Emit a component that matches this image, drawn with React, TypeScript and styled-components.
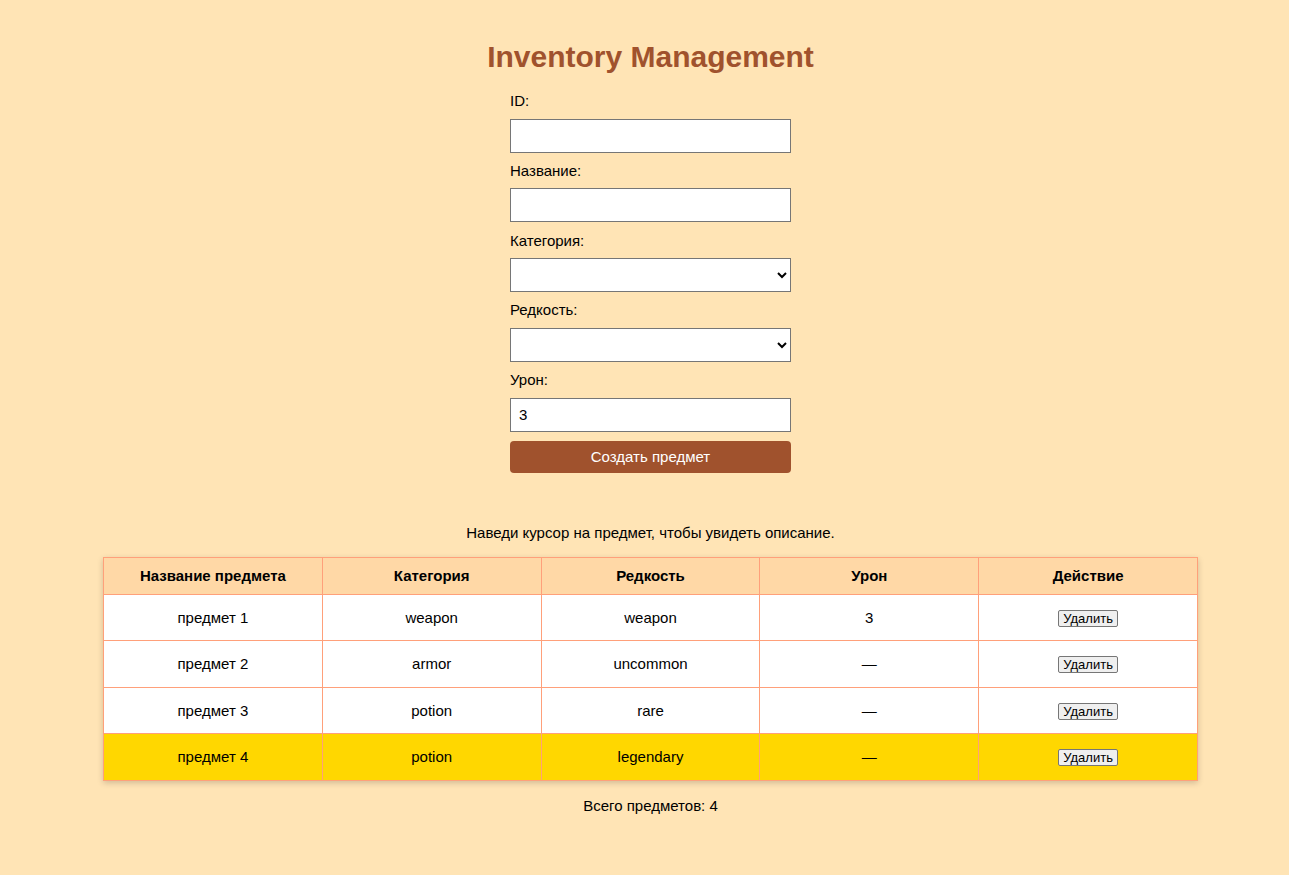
import React from "react";
import styled, { createGlobalStyle } from "styled-components";

const GlobalStyle = createGlobalStyle`
  html, body {
    margin: 0;
    padding: 0;
    background: #ffe4b5;
  }
  body {
    font-family: "Liberation Sans", Arial, sans-serif;
    font-size: 15px;
    color: #000;
  }
`;

const Page = styled.div`
  padding: 40px 8px 40px 20px;
  display: flex;
  flex-direction: column;
  align-items: center;
`;

const Title = styled.h1`
  margin: 0 0 17.5px;
  font-size: 30px;
  line-height: 34.5px;
  font-weight: bold;
  color: #a0522d;
  text-align: center;
`;

const Form = styled.form`
  width: 281px;
  display: flex;
  flex-direction: column;
`;

const Label = styled.label`
  display: block;
  margin-bottom: 9.25px;
  line-height: 17.25px;
`;

const TextInput = styled.input`
  box-sizing: border-box;
  width: 281px;
  height: 34px;
  margin: 0 0 9.25px;
  padding: 0 8px;
  border: 1px solid #767676;
  border-radius: 0;
  background: #fff;
  font-family: "Liberation Sans", Arial, sans-serif;
  font-size: 15px;
  color: #000;
  outline: none;
`;

const Select = styled.select`
  box-sizing: border-box;
  width: 281px;
  height: 34px;
  margin: 0 0 9.25px;
  padding: 0 6px;
  border: 1px solid #767676;
  border-radius: 0;
  background-color: #fff;
  font-family: "Liberation Sans", Arial, sans-serif;
  font-size: 15px;
  color: #000;
`;

const SubmitButton = styled.button`
  box-sizing: border-box;
  width: 281px;
  height: 32px;
  border: none;
  border-radius: 4px;
  background: #a0522d;
  color: #fff;
  font-family: "Liberation Sans", Arial, sans-serif;
  font-size: 15px;
  cursor: pointer;
`;

const Hint = styled.p`
  margin: 51.6px 0 15.4px;
  line-height: 17.25px;
  text-align: center;
`;

const Table = styled.table`
  width: 1095px;
  border-collapse: collapse;
  table-layout: fixed;
  background: #fff;
  box-shadow: 0 2px 6px rgba(0, 0, 0, 0.18);
`;

const Th = styled.th`
  padding: 9.2px 12px;
  border: 1px solid #ffa07a;
  background: #ffd8a6;
  font-weight: bold;
  line-height: 17.25px;
  text-align: center;
`;

const Tr = styled.tr<{ $highlight?: boolean }>`
  background: ${(p) => (p.$highlight ? "#ffd700" : "#fff")};
`;

const Td = styled.td`
  padding: 13.5px 12px;
  border: 1px solid #ffa07a;
  line-height: 17.25px;
  text-align: center;
  vertical-align: middle;
`;

const DeleteButton = styled.button`
  height: 17px;
  padding: 0 4px;
  border: 1px solid #767676;
  border-radius: 2px;
  background: #efefef;
  font-family: "Liberation Sans", Arial, sans-serif;
  font-size: 13px;
  line-height: 15px;
  color: #000;
  vertical-align: middle;
  cursor: pointer;
`;

const Total = styled.p`
  margin: 16px 0 0;
  line-height: 17.25px;
  text-align: center;
`;

type Item = {
  name: string;
  category: string;
  rarity: string;
  damage: string;
};

const items: Item[] = [
  { name: "предмет 1", category: "weapon", rarity: "weapon", damage: "3" },
  { name: "предмет 2", category: "armor", rarity: "uncommon", damage: "—" },
  { name: "предмет 3", category: "potion", rarity: "rare", damage: "—" },
  { name: "предмет 4", category: "potion", rarity: "legendary", damage: "—" },
];

export default function App() {
  return (
    <>
      <GlobalStyle />
      <Page>
        <Title>Inventory Management</Title>
        <Form onSubmit={(e) => e.preventDefault()}>
          <Label htmlFor="id">ID:</Label>
          <TextInput id="id" type="text" />
          <Label htmlFor="name">Название:</Label>
          <TextInput id="name" type="text" />
          <Label htmlFor="category">Категория:</Label>
          <Select id="category" defaultValue="">
            <option value=""></option>
            <option value="weapon">weapon</option>
            <option value="armor">armor</option>
            <option value="potion">potion</option>
          </Select>
          <Label htmlFor="rarity">Редкость:</Label>
          <Select id="rarity" defaultValue="">
            <option value=""></option>
            <option value="common">common</option>
            <option value="uncommon">uncommon</option>
            <option value="rare">rare</option>
            <option value="legendary">legendary</option>
          </Select>
          <Label htmlFor="damage">Урон:</Label>
          <TextInput id="damage" type="number" defaultValue="3" />
          <SubmitButton type="submit">Создать предмет</SubmitButton>
        </Form>
        <Hint>Наведи курсор на предмет, чтобы увидеть описание.</Hint>
        <Table>
          <thead>
            <tr>
              <Th>Название предмета</Th>
              <Th>Категория</Th>
              <Th>Редкость</Th>
              <Th>Урон</Th>
              <Th>Действие</Th>
            </tr>
          </thead>
          <tbody>
            {items.map((it) => (
              <Tr key={it.name} $highlight={it.rarity === "legendary"}>
                <Td>{it.name}</Td>
                <Td>{it.category}</Td>
                <Td>{it.rarity}</Td>
                <Td>{it.damage}</Td>
                <Td>
                  <DeleteButton type="button">Удалить</DeleteButton>
                </Td>
              </Tr>
            ))}
          </tbody>
        </Table>
        <Total>Всего предметов: {items.length}</Total>
      </Page>
    </>
  );
}
